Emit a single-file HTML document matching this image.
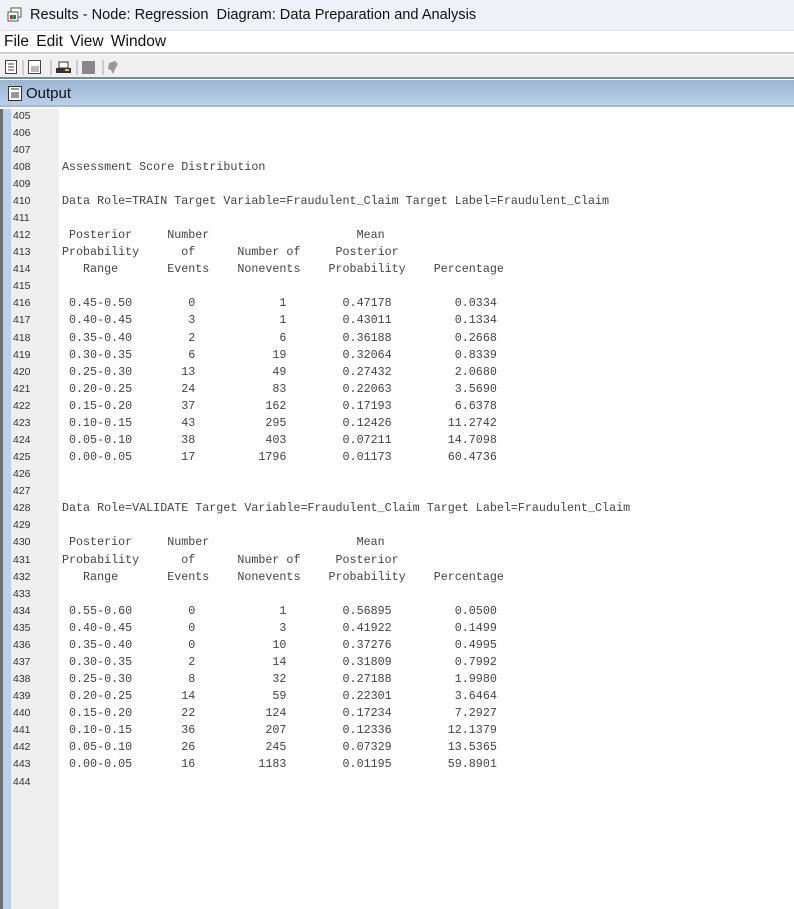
<!DOCTYPE html>
<html><head><meta charset="utf-8"><style>
*{margin:0;padding:0;box-sizing:border-box}
html,body{width:794px;height:909px;overflow:hidden;background:#fff;font-family:"Liberation Sans",sans-serif}
#title{position:absolute;left:0;top:0;width:794px;height:31px;background:#eef2f7;border-bottom:1px solid #e2e6ea}
#title span{position:absolute;left:30px;top:7px;font-size:14.6px;color:#111}
#menu{position:absolute;left:0;top:31px;width:794px;height:23px;background:#fff;border-bottom:2px solid #cfcfcf}
#menu span{position:absolute;left:4px;top:2px;font-size:15.5px;color:#111;word-spacing:3px}
#tool{position:absolute;left:0;top:55px;width:794px;height:24px;background:#f0f0f0;border-bottom:2px solid #7e8794}
#hdr{position:absolute;left:0;top:80px;width:794px;height:27px;background:linear-gradient(#99b4d2,#b8d0ea);border-bottom:2px solid #b0b8c4}
#hdr span{position:absolute;left:26px;top:5px;font-size:15px;color:#111}
#lb1{position:absolute;left:0;top:109px;width:3px;height:800px;background:#707070}
#lb2{position:absolute;left:3px;top:109px;width:8px;height:800px;background:#b9d1ec}
#gut{position:absolute;left:11px;top:109px;width:48px;height:800px;background:#efefef}
#nums{position:absolute;left:13px;top:107.5px;font-size:10.5px;line-height:17.08px;color:#333;white-space:pre;font-family:"Liberation Sans",sans-serif}
#txt{position:absolute;left:62px;top:107.5px;font-family:"Liberation Mono",monospace;font-size:11.7px;line-height:17.08px;color:#444;white-space:pre}
</style></head><body>
<div id="title">
<svg style="position:absolute;left:7px;top:7px" width="16" height="16" viewBox="0 0 16 16"><rect x="4" y="1" width="10" height="9" fill="#fff" stroke="#555"/><rect x="1" y="5" width="10" height="9" fill="#fff" stroke="#555"/><rect x="3" y="8" width="2" height="4" fill="#d22"/><rect x="5" y="8" width="2" height="4" fill="#2a2"/><rect x="7" y="8" width="2" height="4" fill="#26c"/></svg>
<span>Results - Node: Regression&nbsp; Diagram: Data Preparation and Analysis</span></div>
<div id="menu"><span>File Edit View Window</span></div>
<div id="tool">
<svg style="position:absolute;left:4px;top:4px" width="130" height="16" viewBox="0 0 130 16">
<rect x="1.5" y="1.5" width="11" height="13" fill="#fff" stroke="#444"/><path d="M4 5h6M4 8h6M4 11h6" stroke="#444"/>
<path d="M19 1v15M47 1v15M73 1v15M99 1v15" stroke="#aaa"/>
<rect x="24.5" y="1.5" width="12" height="13" fill="#fff" stroke="#444"/><rect x="27" y="7" width="8" height="6" fill="#bbb"/>
<path d="M52 9h15v5H52z" fill="#333"/><path d="M55 3h9v6h-9z" fill="#fff" stroke="#333"/><rect x="61" y="10" width="4" height="2" fill="#dc3"/>
<rect x="78" y="2" width="13" height="13" fill="#888"/>
<path d="M105 4l6-2 3 3-3 5-2 5-2-4-3-1z" fill="#999"/>
</svg></div>
<div id="hdr">
<svg style="position:absolute;left:8px;top:6px" width="14" height="15" viewBox="0 0 14 15"><rect x="0.5" y="0.5" width="13" height="14" fill="#fff" stroke="#333"/><rect x="3" y="6" width="8" height="6" fill="#999"/><path d="M3 3h8" stroke="#333"/></svg>
<span>Output</span></div>
<div id="lb1"></div><div id="lb2"></div><div id="gut"></div>
<div id="nums">405
406
407
408
409
410
411
412
413
414
415
416
417
418
419
420
421
422
423
424
425
426
427
428
429
430
431
432
433
434
435
436
437
438
439
440
441
442
443
444</div>
<div id="txt">


Assessment Score Distribution

Data Role=TRAIN Target Variable=Fraudulent_Claim Target Label=Fraudulent_Claim

 Posterior     Number                     Mean
Probability      of      Number of     Posterior
   Range       Events    Nonevents    Probability    Percentage

 0.45-0.50        0            1        0.47178         0.0334
 0.40-0.45        3            1        0.43011         0.1334
 0.35-0.40        2            6        0.36188         0.2668
 0.30-0.35        6           19        0.32064         0.8339
 0.25-0.30       13           49        0.27432         2.0680
 0.20-0.25       24           83        0.22063         3.5690
 0.15-0.20       37          162        0.17193         6.6378
 0.10-0.15       43          295        0.12426        11.2742
 0.05-0.10       38          403        0.07211        14.7098
 0.00-0.05       17         1796        0.01173        60.4736


Data Role=VALIDATE Target Variable=Fraudulent_Claim Target Label=Fraudulent_Claim

 Posterior     Number                     Mean
Probability      of      Number of     Posterior
   Range       Events    Nonevents    Probability    Percentage

 0.55-0.60        0            1        0.56895         0.0500
 0.40-0.45        0            3        0.41922         0.1499
 0.35-0.40        0           10        0.37276         0.4995
 0.30-0.35        2           14        0.31809         0.7992
 0.25-0.30        8           32        0.27188         1.9980
 0.20-0.25       14           59        0.22301         3.6464
 0.15-0.20       22          124        0.17234         7.2927
 0.10-0.15       36          207        0.12336        12.1379
 0.05-0.10       26          245        0.07329        13.5365
 0.00-0.05       16         1183        0.01195        59.8901
</div>
</body></html>
